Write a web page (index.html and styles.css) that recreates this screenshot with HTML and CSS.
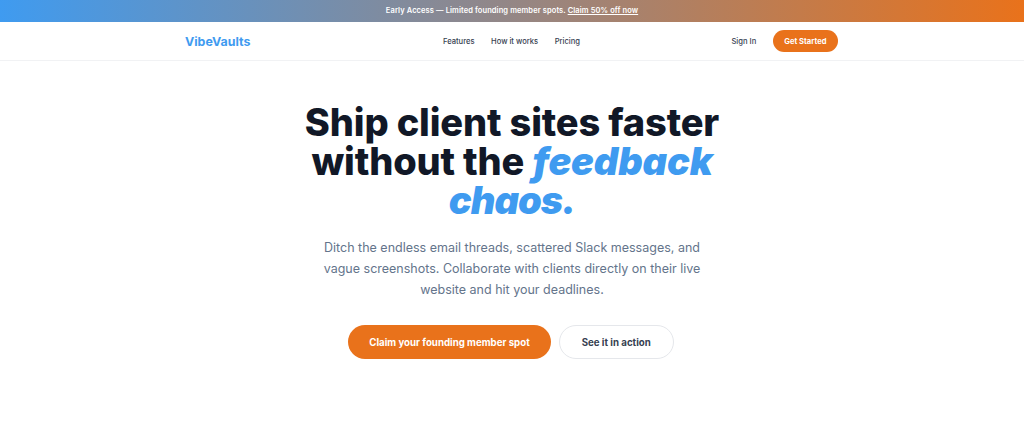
FILE: index.html
```html
<!DOCTYPE html>
<html lang="en">
<head>
    <meta charset="UTF-8">
    <meta name="viewport" content="width=device-width, initial-scale=1.0">
    <title>VibeVaults</title>
    <link rel="stylesheet" href="styles.css">
</head>
<body>
    <div class="banner">
        Early Access — Limited founding member spots. <a href="#">Claim 50% off now</a>
    </div>
    <nav class="nav">
        <div class="nav-inner">
            <a class="logo" href="#">VibeVaults</a>
            <div class="nav-links">
                <a href="#">Features</a>
                <a href="#">How it works</a>
                <a href="#">Pricing</a>
            </div>
            <div class="nav-actions">
                <a class="sign-in" href="#">Sign In</a>
                <a class="get-started" href="#">Get Started</a>
            </div>
        </div>
    </nav>
    <main class="hero">
        <h1>Ship client sites faster without the <em>feedback</em> <em class="chaos">chaos.</em></h1>
        <p class="lead">Ditch the endless email threads, scattered Slack messages, and vague screenshots. Collaborate with clients directly on their live website and hit your deadlines.</p>
        <div class="cta">
            <a class="btn btn-primary" href="#">Claim your founding member spot</a>
            <a class="btn btn-secondary" href="#">See it in action</a>
        </div>
    </main>
</body>
</html>
```

FILE: styles.css
```css
* {
    box-sizing: border-box;
}
body {
    margin: 0;
    font-family: Inter, "Liberation Sans", sans-serif;
    background: #fff;
    color: #111827;
}
a {
    text-decoration: none;
    color: inherit;
}
.banner {
    height: 22px;
    line-height: 21px;
    text-align: center;
    font-size: 7.5px;
    font-weight: 600;
    letter-spacing: 0.1px;
    color: #fff;
    background: linear-gradient(90deg, #3f9bf0, #e9721b);
}
.banner a {
    text-decoration: underline;
}
.nav {
    height: 39px;
    border-bottom: 1px solid #f1f2f4;
}
.nav-inner {
    width: 653px;
    height: 100%;
    margin-left: 185px;
    display: grid;
    grid-template-columns: 1fr auto 1fr;
    align-items: center;
}
.logo {
    font-size: 12.4px;
    font-weight: 700;
    color: #3f9bf0;
}
.nav-links {
    display: flex;
    gap: 16.5px;
    font-size: 7.6px;
    font-weight: 500;
    color: #374151;
}
.nav-actions {
    display: flex;
    align-items: center;
    justify-content: flex-end;
    gap: 16.5px;
    font-size: 7.6px;
    font-weight: 500;
    color: #374151;
}
.get-started {
    height: 22px;
    padding: 0 11.5px;
    display: flex;
    align-items: center;
    border-radius: 11px;
    font-weight: 700;
    color: #fff;
    background: #e9721b;
}
.hero {
    width: 440px;
    margin: 0 auto;
    padding-top: 42px;
    text-align: center;
}
h1 {
    margin: 0;
    font-size: 38px;
    line-height: 39px;
    font-weight: 800;
    letter-spacing: -0.15px;
}
h1 em {
    display: inline-block;
    font-style: italic;
    font-weight: 900;
    color: #3f9bf0;
}
h1 .chaos {
    letter-spacing: -1px;
}
.lead {
    width: 390px;
    margin: 17px auto 0;
    font-size: 12.5px;
    line-height: 21px;
    color: #64748b;
}
.cta {
    margin-top: 25px;
    padding-right: 2px;
    display: flex;
    justify-content: center;
    gap: 8px;
}
.btn {
    height: 34px;
    display: flex;
    align-items: center;
    border-radius: 17px;
    font-size: 9.7px;
    font-weight: 700;
}
.btn-primary {
    padding: 0 21px;
    color: #fff;
    background: #e9721b;
}
.btn-secondary {
    padding: 0 22px;
    color: #374151;
    border: 1px solid #e5e7eb;
}
```
